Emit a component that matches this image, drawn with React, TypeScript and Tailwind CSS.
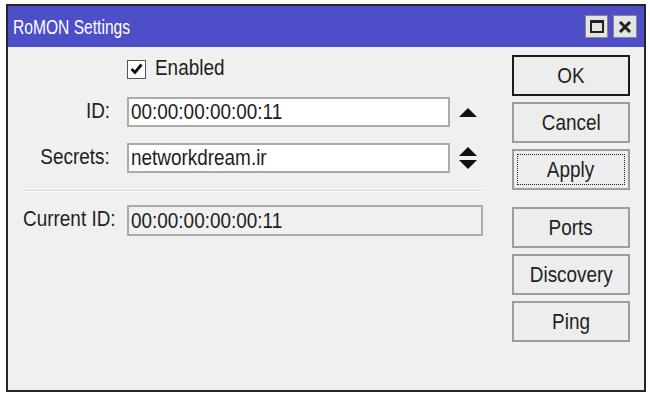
import React from "react";

const font = { fontFamily: '"Liberation Sans", Arial, sans-serif' };

// the screenshot's text is a little narrow for its height, so squeeze it
const T = ({ children, origin = "origin-left" }: { children: React.ReactNode; origin?: string }) => (
  <span className={`inline-block text-[22px] leading-none scale-x-[0.86] whitespace-nowrap ${origin}`}>{children}</span>
);

const WinButton = ({
  label,
  isDefault,
  focused,
}: {
  label: string;
  isDefault?: boolean;
  focused?: boolean;
}) => (
  <div
    className={`h-[41px] w-[118px] bg-[#ededed] border-2 flex items-center justify-center p-[3px] ${
      isDefault ? "border-[#1a1a1a]" : "border-[#9d9d9d]"
    }`}
  >
    <div
      className={`w-full h-full flex items-center justify-center text-[#1e1e1e] ${
        focused ? "border border-dotted border-[#222]" : ""
      }`}
    >
      <T origin="origin-center">{label}</T>
    </div>
  </div>
);

const UpArrow = () => (
  <svg width="18" height="9" viewBox="0 0 18 9">
    <polygon points="9,0 18,9 0,9" fill="#111" />
  </svg>
);

const DownArrow = () => (
  <svg width="18" height="9" viewBox="0 0 18 9">
    <polygon points="0,0 18,0 9,9" fill="#111" />
  </svg>
);

const Field = ({ label, value, children }: { label: string; value: string; children?: React.ReactNode }) => (
  <div className="flex items-center h-[30px]">
    <div className="w-[102px] text-right text-[#1e1e1e]">
      <T origin="origin-right">{label}</T>
    </div>
    <div className="ml-[17px] w-[323px] h-[30px] bg-white border-2 border-[#ababab] flex items-center pl-[2px] text-[#1e1e1e]">
      <T>{value}</T>
    </div>
    <div className="ml-[9px] w-[18px] flex flex-col items-center gap-[4px]">{children}</div>
  </div>
);

export default function App() {
  return (
    <div className="w-[650px] h-[395px] bg-white pt-[4px] pl-[6px]" style={font}>
      <div className="w-[640px] h-[388px] border-2 border-[#262626] flex flex-col bg-[#f0f0f0]">
        {/* title bar */}
        <div className="h-[41px] bg-[#4e4ec9] flex items-center justify-between pl-[5px] pr-[7px]">
          <span className="inline-block text-white text-[20px] scale-x-[0.78] origin-left whitespace-nowrap">
            RoMON Settings
          </span>
          <div className="flex gap-[5px]">
            <div className="w-[23px] h-[23px] bg-[#e4e4e4] border border-[#888] flex items-center justify-center">
              <div className="w-[14px] h-[13px] border-2 border-t-[3px] border-[#222]" />
            </div>
            <div className="w-[24px] h-[23px] bg-[#e4e4e4] border border-[#888] flex items-center justify-center">
              <svg width="12" height="12" viewBox="0 0 12 12">
                <path d="M2 2 L10 10 M10 2 L2 10" stroke="#222" strokeWidth="3" strokeLinecap="square" />
              </svg>
            </div>
          </div>
        </div>

        {/* body */}
        <div className="flex flex-1">
          <div className="w-[504px] flex flex-col">
            <div className="mt-[11px] h-[22px] flex items-center pl-[119px]">
              <div className="w-[19px] h-[19px] bg-white border border-[#555] flex items-center justify-center">
                <svg width="13" height="12" viewBox="0 0 13 12">
                  <polyline points="1.5,6 5,9.5 11.5,1.5" fill="none" stroke="#111" strokeWidth="2.8" />
                </svg>
              </div>
              <span className="ml-[9px] text-[#1e1e1e]">
                <T>Enabled</T>
              </span>
            </div>

            <div className="mt-[17px]">
              <Field label="ID:" value="00:00:00:00:00:11">
                <UpArrow />
              </Field>
            </div>

            <div className="mt-[16px]">
              <Field label="Secrets:" value="networkdream.ir">
                <UpArrow />
                <DownArrow />
              </Field>
            </div>

            <div className="mt-[17px] ml-[16px] w-[459px] h-[2px] bg-[#dadada] border-b border-white" />

            <div className="mt-[13px] flex items-center h-[31px]">
              <div className="w-[102px] text-right text-[#1e1e1e]">
                <T origin="origin-right">Current ID:</T>
              </div>
              <div className="ml-[17px] w-[356px] h-[31px] bg-[#f0f0f0] border-2 border-[#ababab] flex items-center pl-[2px] text-[#1e1e1e]">
                <T>00:00:00:00:00:11</T>
              </div>
            </div>
          </div>

          <div className="pt-[8px] flex flex-col gap-[6px]">
            <WinButton label="OK" isDefault />
            <WinButton label="Cancel" />
            <WinButton label="Apply" focused />
            <div className="mt-[11px] flex flex-col gap-[6px]">
              <WinButton label="Ports" />
              <WinButton label="Discovery" />
              <WinButton label="Ping" />
            </div>
          </div>
        </div>
      </div>
    </div>
  );
}
